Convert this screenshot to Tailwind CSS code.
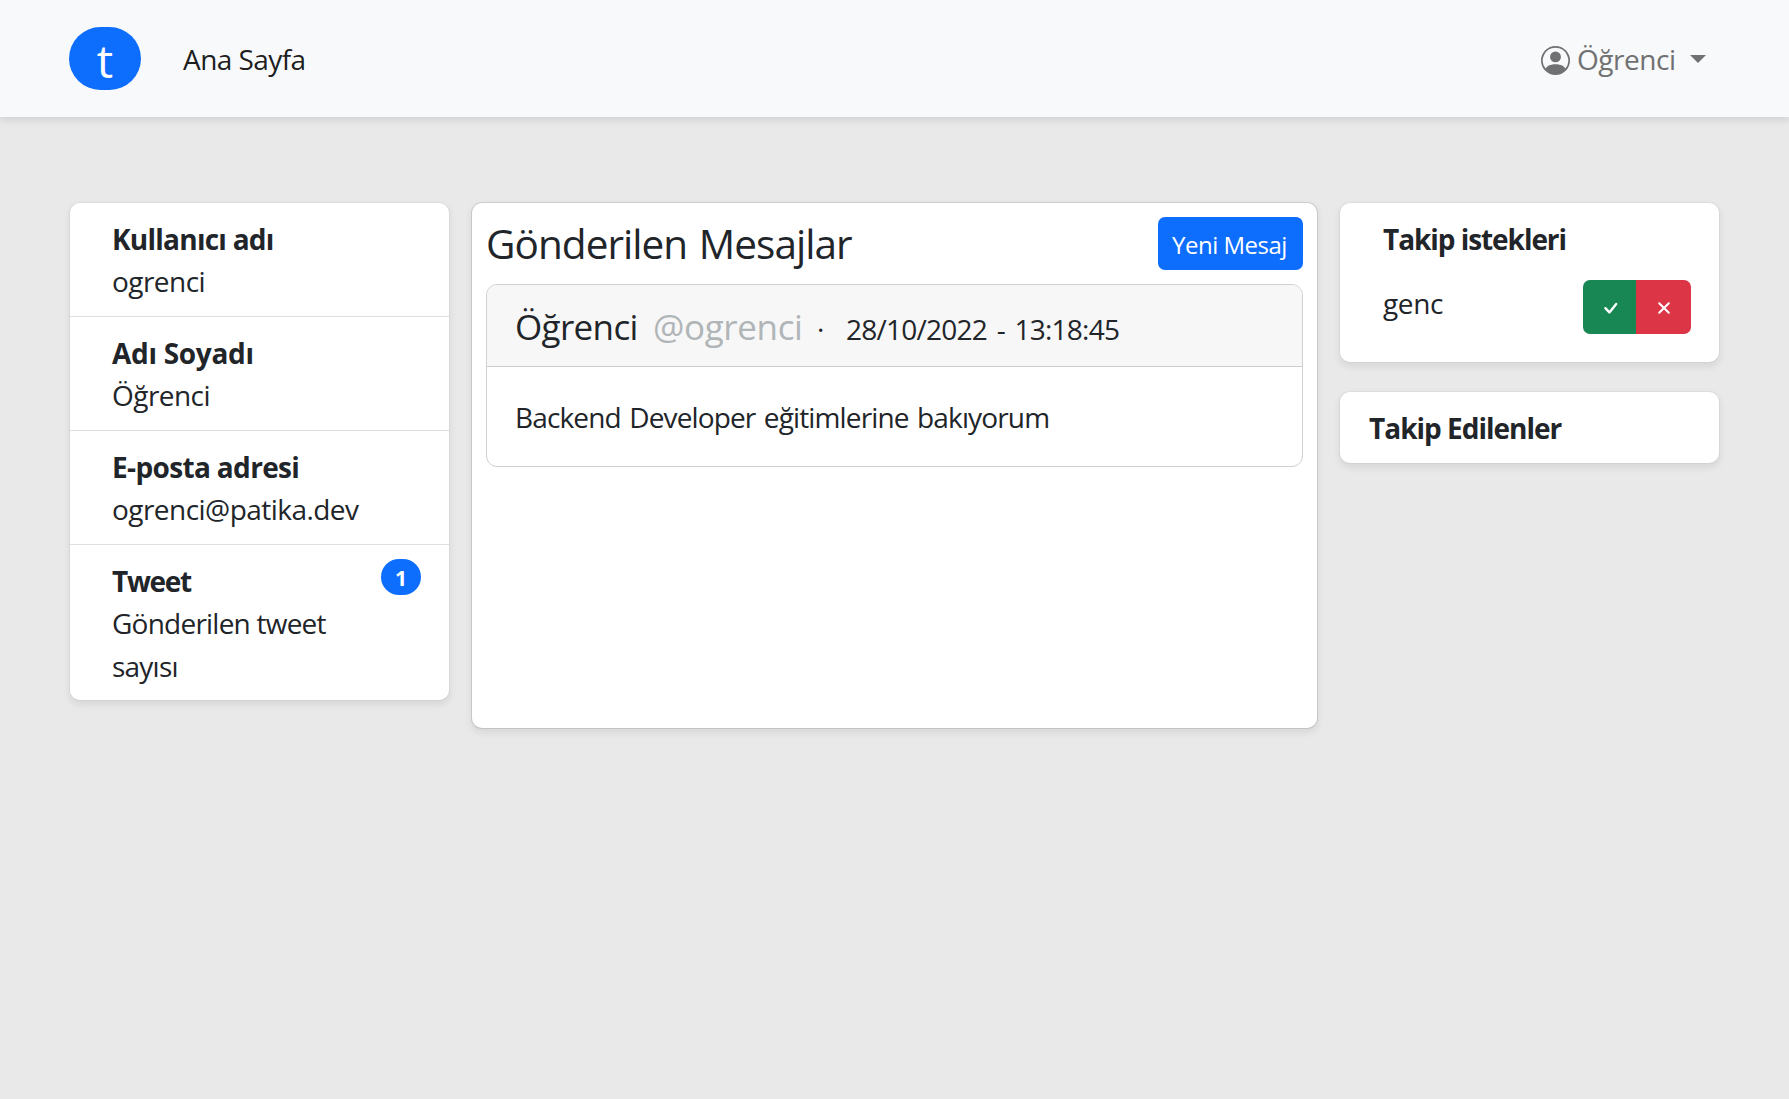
<!DOCTYPE html>
<html lang="tr">
<head>
<meta charset="utf-8">
<title>Ana Sayfa</title>
<script src="https://cdn.jsdelivr.net/npm/@tailwindcss/browser@4"></script>
</head>
<body class="min-h-screen overflow-hidden bg-[#e9e9e9] font-['Open_Sans',sans-serif] text-[28px] leading-[43px] text-[#212529]">
  <nav class="flex h-[117px] items-start bg-[#f8f9fa] pl-[69px] pr-[83px] pt-[27px] shadow-[0_3.5px_7px_rgba(0,0,0,0.1)]">
    <a class="flex h-[63px] w-[72px] justify-center rounded-full bg-[#0d6efd] text-[46px] leading-[67px] text-white">t</a>
    <a class="ml-[42px] mt-[11px] tracking-[-0.57px] text-black/90">Ana Sayfa</a>
    <div class="ml-auto flex text-[#707172]">
      <svg class="mt-[19px] size-[29px]" viewBox="0 0 16 16" fill="currentColor"><path d="M11 6a3 3 0 1 1-6 0 3 3 0 0 1 6 0z"/><path fill-rule="evenodd" d="M0 8a8 8 0 1 1 16 0A8 8 0 0 1 0 8zm8-7a7 7 0 0 0-5.468 11.37C3.242 11.226 4.805 10 8 10s4.757 1.225 5.468 2.37A7 7 0 0 0 8 1z"/></svg>
      <span class="ml-[7px] mt-[11px] w-[98px] tracking-[-0.46px]">Öğrenci</span>
      <svg class="ml-[15px] mt-[28px] h-[8px] w-[16px]" viewBox="0 0 16 8" fill="currentColor"><path d="M0 0h16L8 8z"/></svg>
    </div>
  </nav>

  <main class="flex items-start px-[69px] pt-[85px]">
    <aside class="w-[381px] rounded-[11px] border border-black/[0.03] bg-white bg-clip-padding shadow-[0_3.5px_7px_rgba(0,0,0,0.075)]">
      <div class="h-[114px] border-b border-[#dfdfdf] px-[42px] pt-[15px]">
        <div class="font-bold leading-[42px] tracking-[-0.75px]">Kullanıcı adı</div>
        <div class="tracking-[-0.55px]">ogrenci</div>
      </div>
      <div class="h-[114px] border-b border-[#dfdfdf] px-[42px] pt-[15px]">
        <div class="font-bold leading-[42px] tracking-[-0.3px]">Adı Soyadı</div>
        <div class="tracking-[-0.55px]">Öğrenci</div>
      </div>
      <div class="h-[114px] border-b border-[#dfdfdf] px-[42px] pt-[15px]">
        <div class="font-bold leading-[42px] tracking-[-0.65px]">E-posta adresi</div>
        <div class="tracking-[-0.54px]">ogrenci@patika.dev</div>
      </div>
      <div class="flex h-[155px] items-start justify-between pl-[42px] pr-[28px] pt-[14px]">
        <div class="pt-px">
          <div class="font-bold leading-[42px] tracking-[-1.3px]">Tweet</div>
          <div class="tracking-[-0.77px]">Gönderilen tweet<br>sayısı</div>
        </div>
        <span class="h-[36px] w-[40px] rounded-full bg-[#0d6efd] text-center text-[21px] font-bold leading-[38px] text-white">1</span>
      </div>
    </aside>

    <section class="ml-[21px] h-[527px] w-[847px] rounded-[11px] border border-black/10 bg-white bg-clip-padding px-[14px] pt-[14px] shadow-[0_3.5px_7px_rgba(0,0,0,0.075)]">
      <div class="flex justify-between">
        <h1 class="text-[40.5px] leading-[54px] tracking-[-0.95px] [word-spacing:2px]">Gönderilen Mesajlar</h1>
        <button class="h-[53px] w-[145px] rounded-[7px] bg-[#0d6efd] pr-[2px] pt-px text-[24px] leading-[53px] tracking-[-0.5px] text-white">Yeni Mesaj</button>
      </div>
      <article class="mt-[13px] h-[183px] overflow-hidden rounded-[11px] border border-[#d0d0d0]">
        <header class="flex h-[82px] items-baseline border-b border-[#cbcccc] bg-[#f7f7f7] pl-[28px] pt-[20px]">
          <span class="w-[138px] text-[35px] tracking-[-0.65px]">Öğrenci</span>
          <span class="w-[163px] text-[35px] tracking-[-0.37px] text-[#b0b5b8]">@ogrenci</span>
          <span class="w-[30px] pl-px">·</span>
          <span class="tracking-[-0.75px] [word-spacing:3px]">28/10/2022 - 13:18:45</span>
        </header>
        <p class="pl-[28px] pt-[29px] tracking-[-0.86px] [word-spacing:2px]">Backend Developer eğitimlerine bakıyorum</p>
      </article>
    </section>

    <aside class="ml-[21px] flex w-[381px] flex-col gap-[28px]">
      <div class="h-[161px] rounded-[11px] border border-black/[0.03] bg-white bg-clip-padding pl-[42px] pr-[28px] pt-[15px] shadow-[0_3.5px_7px_rgba(0,0,0,0.075)]">
        <div class="pl-px font-bold tracking-[-1.06px]">Takip istekleri</div>
        <div class="mt-[19px] flex justify-between">
          <span class="pl-px pt-[2px] tracking-[-0.37px]">genc</span>
          <div class="flex h-[54px] overflow-hidden rounded-[7px] text-white">
            <button class="flex w-[53px] items-center justify-center bg-[#198754]"><svg class="ml-[3px] mt-[2px] h-[14px] w-[16px]" viewBox="0 0 16 14" fill="none" stroke="currentColor" stroke-width="2.4" stroke-linecap="round" stroke-linejoin="round"><path d="M2.4 7.2l4 4.2L13.2 3"/></svg></button>
            <button class="flex w-[55px] items-center justify-center bg-[#dc3545]"><svg class="mt-[2px] size-[14px]" viewBox="0 0 14 14" fill="none" stroke="currentColor" stroke-width="2" stroke-linecap="round"><path d="M2.2 2.2l9.6 9.6M11.8 2.2l-9.6 9.6"/></svg></button>
          </div>
        </div>
      </div>
      <div class="h-[73px] rounded-[11px] border border-black/[0.03] bg-white bg-clip-padding pl-[29px] pt-[15px] font-bold tracking-[-1px] shadow-[0_3.5px_7px_rgba(0,0,0,0.075)]">Takip Edilenler</div>
    </aside>
  </main>
</body>
</html>
